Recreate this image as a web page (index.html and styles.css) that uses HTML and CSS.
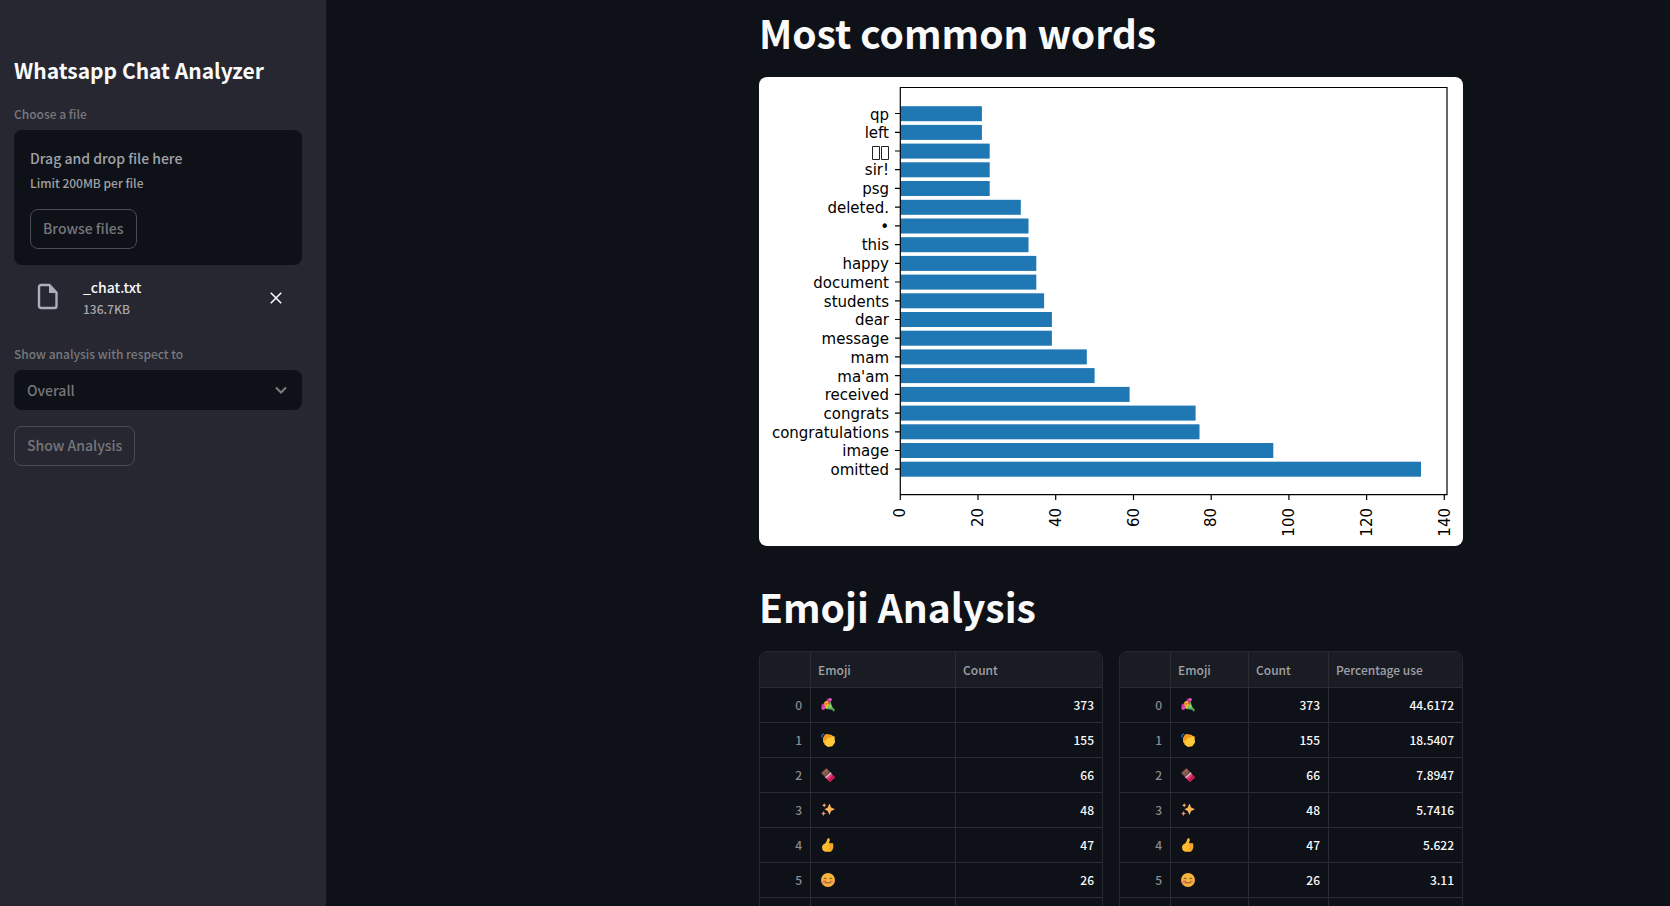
FILE: index.html
```html
<!DOCTYPE html>
<html lang="en">
<head>
<meta charset="utf-8">
<meta name="viewport" content="width=device-width, initial-scale=1">
<title>Whatsapp Chat Analyzer</title>
<link rel="stylesheet" href="styles.css">
</head>
<body>
<svg class="sprite" aria-hidden="true">
  <symbol id="bouquet" viewBox="0 0 14 14">
    <path fill="#4caf50" d="M5 9.500 9.500 3l1.500 5 1.200 2.200L14 11.500l-.6 1-.4 1.500-1.600-2-2.400-.6L5 11z"/>
    <path fill="#8bd36b" d="M7 9 9.800 6l1 3-1.300 1.400z"/>
    <circle cx="2.800" cy="7.800" r="2.400" fill="#c23a9b"/><circle cx="2.300" cy="10" r="2" fill="#d94bb0"/>
    <circle cx="7.800" cy="2.600" r="2.300" fill="#b92d92"/><circle cx="9.300" cy="1.600" r="1.500" fill="#e25fc0"/>
    <circle cx="5.800" cy="5.800" r="2.700" fill="#f5b52c"/><circle cx="5" cy="6" r="1" fill="#e8583a"/>
    <circle cx="7.800" cy="5" r="1.100" fill="#e8453f"/><circle cx="5.500" cy="9.300" r="1.200" fill="#f3cf3c"/>
  </symbol>
  <symbol id="clap" viewBox="0 0 14 14">
    <path fill="none" stroke="#1976d2" stroke-width="1.2" d="M1 4.500V2.200L3 .8"/>
    <path fill="#f59f1d" d="M2 5 4 1.600 6 1l5 1 2 3v5l-3 3H6L2 9z"/>
    <path fill="#ffca3a" d="M3.500 8 7 5l3-1 3.500-1 .5 6.500-2.700 3.700-4.300.8-3.500-2.500z"/>
    <path fill="none" stroke="#e88916" stroke-width=".7" d="m4.500 3 3 2M3 5l3 2M7.500 2.400l2 2"/>
  </symbol>
  <symbol id="chocolate" viewBox="0 0 14 14">
    <path fill="#795046" d="M5.500 0 10 5 4.500 9.500 0 5z"/>
    <path fill="#9b6b5c" d="m5.400 1.200 1.600 1.700-1.800 1.500-1.600-1.600zM3 3.300 4.600 5 3 6.400 1.400 4.900z"/>
    <path fill="#e5447e" d="m10 5 4 4.400-5 4.600-4.500-4.500z"/>
    <path fill="#c8184f" d="m11.500 7 2.500 2.400-5 4.600-2-2z"/>
    <path stroke="#dfbdcf" stroke-width="1.300" d="m4.400 9.700 5.800-5"/>
  </symbol>
  <symbol id="sparkles" viewBox="0 0 14 14">
    <path fill="#fbb65b" d="m8.500.500 1.600 4L14 6.200l-3.900 1.900-1.600 4-1.800-4L3.500 6.200l3.200-1.700z"/>
    <path fill="#f28d6a" d="m2.500 8 .8 1.800 1.800.8-1.800.7-.8 2-.8-2-1.700-.7 1.700-.8z"/>
    <path fill="#f7a46d" d="m3.200 0 .7 1.500 1.600.7-1.600.7-.7 1.600-.7-1.600L1 2.200l1.500-.7z"/>
  </symbol>
  <symbol id="thumb" viewBox="0 0 14 14">
    <path fill="#fbb92f" d="M7 .2c1.500-.3 2 .8 1.700 2.400L8 5.300h3c1.200 0 1.600 1 1 1.800.7.6.6 1.400 0 1.900.5.7.3 1.400-.4 1.800.3.8-.2 1.500-1 1.600 0 .9-.6 1.400-1.500 1.400H5C2.500 13.800 1 12 1 9.500c0-2 1-3.300 3-4C5.500 4 6.200 2 6.300.8z"/>
    <path fill="none" stroke="#e58b1c" stroke-width=".7" d="M8 7h4M8 9h4M8 11h3.500"/>
  </symbol>
  <symbol id="smile" viewBox="0 0 14 14">
    <circle cx="7" cy="7" r="7" fill="#f7b53c"/>
    <circle cx="3.200" cy="9" r="2.300" fill="#f08a55"/><circle cx="11" cy="9" r="2.200" fill="#f59b52"/>
    <path fill="none" stroke="#6b3a22" stroke-width=".9" stroke-linecap="round" d="M3 5.600q1.200-1.500 2.400 0M8.600 5.600q1.200-1.500 2.400 0M4 8.800q3 2.800 6 0"/>
  </symbol>
</svg>

<div class="app">
  <aside class="sidebar">
    <h1 class="sidebar-title">Whatsapp Chat Analyzer</h1>

    <label class="label" for="browse">Choose a file</label>
    <div class="dropzone">
      <span class="drop-main">Drag and drop file here</span>
      <span class="drop-hint">Limit 200MB per file</span>
      <button class="button" id="browse" type="button">Browse files</button>
    </div>
    <div class="file">
      <svg class="file-icon" viewBox="0 0 24 30" aria-hidden="true">
        <path fill="none" stroke="#a9aec0" stroke-width="2.400" stroke-linejoin="round" d="M5 3h8.500L20.500 10.500V24a2 2 0 0 1-2 2H5a2 2 0 0 1-2-2V5a2 2 0 0 1 2-2z"/>
        <path fill="#a9aec0" d="M13 3v8h8z"/>
      </svg>
      <div class="file-text">
        <span class="file-name">_chat.txt</span>
        <span class="file-size">136.7KB</span>
      </div>
      <button class="remove" type="button" aria-label="Remove file">
        <svg class="remove-icon" viewBox="0 0 12 12" aria-hidden="true"><path stroke="#fafafa" stroke-width="1.600" d="m.8.800 10.400 10.400M11.200.8.800 11.200"/></svg>
      </button>
    </div>

    <label class="label" for="user">Show analysis with respect to</label>
    <div class="select-wrap">
      <select class="select" id="user"><option>Overall</option></select>
      <svg class="chevron" viewBox="0 0 12 8" aria-hidden="true"><path fill="none" stroke="#7c7d80" stroke-width="2" d="m1 1.500 5 5 5-5"/></svg>
    </div>
    <button class="button" type="button">Show Analysis</button>
  </aside>

  <main class="main">
    <div class="content">
      <h2 class="heading">Most common words</h2>
      <svg class="chart" viewBox="0 0 704 469" role="img" aria-label="Most common words bar chart">
        <g class="bars">
          <rect x="141.300" y="29.2" width="81.600" height="15"/>
          <rect x="141.300" y="47.9" width="81.600" height="15"/>
          <rect x="141.300" y="66.6" width="89.400" height="15"/>
          <rect x="141.300" y="85.3" width="89.400" height="15"/>
          <rect x="141.300" y="104" width="89.400" height="15"/>
          <rect x="141.300" y="122.800" width="120.500" height="15"/>
          <rect x="141.300" y="141.500" width="128.200" height="15"/>
          <rect x="141.300" y="160.200" width="128.200" height="15"/>
          <rect x="141.300" y="178.900" width="136" height="15"/>
          <rect x="141.300" y="197.600" width="136" height="15"/>
          <rect x="141.300" y="216.300" width="143.800" height="15"/>
          <rect x="141.300" y="235" width="151.600" height="15"/>
          <rect x="141.300" y="253.700" width="151.600" height="15"/>
          <rect x="141.300" y="272.400" width="186.500" height="15"/>
          <rect x="141.300" y="291.100" width="194.300" height="15"/>
          <rect x="141.300" y="309.900" width="229.300" height="15"/>
          <rect x="141.300" y="328.600" width="295.300" height="15"/>
          <rect x="141.300" y="347.300" width="299.200" height="15"/>
          <rect x="141.300" y="366" width="373" height="15"/>
          <rect x="141.300" y="384.700" width="520.700" height="15"/>
        </g>
        <path class="axes" d="M141.300 10.500H688V417.600H141.300z"/>
        <path class="axes" d="M136 36.500h5M136 55.300h5M136 74h5M136 92.700h5M136 111.400h5M136 130.200h5M136 148.900h5M136 167.600h5M136 186.300h5M136 205h5M136 223.800h5M136 242.500h5M136 261.200h5M136 279.900h5M136 298.600h5M136 317.400h5M136 336.100h5M136 354.800h5M136 373.500h5M136 392.200h5M141.300 418v5M219 418v5M296.700 418v5M374.500 418v5M452.200 418v5M529.900 418v5M607.600 418v5M685.300 418v5"/>
        <path class="missing" d="M113.500 69.500h7v13h-7zM122.500 69.500h7v13h-7z"/>
        <g class="words">
          <text x="130" y="43">qp</text>
          <text x="130" y="61">left</text>
          <text x="130" y="98">sir!</text>
          <text x="130" y="117">psg</text>
          <text x="130" y="136">deleted.</text>
          <text x="130" y="155">•</text>
          <text x="130" y="173">this</text>
          <text x="130" y="192">happy</text>
          <text x="130" y="211">document</text>
          <text x="130" y="230">students</text>
          <text x="130" y="248">dear</text>
          <text x="130" y="267">message</text>
          <text x="130" y="286">mam</text>
          <text x="130" y="305">ma'am</text>
          <text x="130" y="323">received</text>
          <text x="130" y="342">congrats</text>
          <text x="130" y="361">congratulations</text>
          <text x="130" y="379">image</text>
          <text x="130" y="398">omitted</text>
        </g>
        <g class="words">
          <text transform="translate(146 431) rotate(-90)">0</text>
          <text transform="translate(224 431) rotate(-90)">20</text>
          <text transform="translate(302 431) rotate(-90)">40</text>
          <text transform="translate(380 431) rotate(-90)">60</text>
          <text transform="translate(457 431) rotate(-90)">80</text>
          <text transform="translate(535 431) rotate(-90)">100</text>
          <text transform="translate(613 431) rotate(-90)">120</text>
          <text transform="translate(691 431) rotate(-90)">140</text>
        </g>
      </svg>

      <h2 class="heading">Emoji Analysis</h2>
      <div class="tables">
        <div class="table-frame">
          <table class="table">
            <colgroup><col class="col-index"><col class="col-emoji-wide"><col></colgroup>
            <thead><tr><th scope="col" aria-label="Index"></th><th scope="col">Emoji</th><th scope="col">Count</th></tr></thead>
            <tbody>
              <tr><td class="index">0</td><td><svg class="emoji" role="img" aria-label="Bouquet"><use href="#bouquet"/></svg></td><td class="num">373</td></tr>
              <tr><td class="index">1</td><td><svg class="emoji" role="img" aria-label="Clapping hands"><use href="#clap"/></svg></td><td class="num">155</td></tr>
              <tr><td class="index">2</td><td><svg class="emoji" role="img" aria-label="Chocolate bar"><use href="#chocolate"/></svg></td><td class="num">66</td></tr>
              <tr><td class="index">3</td><td><svg class="emoji" role="img" aria-label="Sparkles"><use href="#sparkles"/></svg></td><td class="num">48</td></tr>
              <tr><td class="index">4</td><td><svg class="emoji" role="img" aria-label="Thumbs up"><use href="#thumb"/></svg></td><td class="num">47</td></tr>
              <tr><td class="index">5</td><td><svg class="emoji" role="img" aria-label="Smiling face"><use href="#smile"/></svg></td><td class="num">26</td></tr>
              <tr><td></td><td></td><td></td></tr>
            </tbody>
          </table>
        </div>
        <div class="table-frame">
          <table class="table">
            <colgroup><col class="col-index"><col class="col-emoji"><col class="col-count"><col></colgroup>
            <thead><tr><th scope="col" aria-label="Index"></th><th scope="col">Emoji</th><th scope="col">Count</th><th scope="col">Percentage use</th></tr></thead>
            <tbody>
              <tr><td class="index">0</td><td><svg class="emoji" role="img" aria-label="Bouquet"><use href="#bouquet"/></svg></td><td class="num">373</td><td class="num">44.6172</td></tr>
              <tr><td class="index">1</td><td><svg class="emoji" role="img" aria-label="Clapping hands"><use href="#clap"/></svg></td><td class="num">155</td><td class="num">18.5407</td></tr>
              <tr><td class="index">2</td><td><svg class="emoji" role="img" aria-label="Chocolate bar"><use href="#chocolate"/></svg></td><td class="num">66</td><td class="num">7.8947</td></tr>
              <tr><td class="index">3</td><td><svg class="emoji" role="img" aria-label="Sparkles"><use href="#sparkles"/></svg></td><td class="num">48</td><td class="num">5.7416</td></tr>
              <tr><td class="index">4</td><td><svg class="emoji" role="img" aria-label="Thumbs up"><use href="#thumb"/></svg></td><td class="num">47</td><td class="num">5.622</td></tr>
              <tr><td class="index">5</td><td><svg class="emoji" role="img" aria-label="Smiling face"><use href="#smile"/></svg></td><td class="num">26</td><td class="num">3.11</td></tr>
              <tr><td></td><td></td><td></td><td></td></tr>
            </tbody>
          </table>
        </div>
      </div>
    </div>
  </main>
</div>
</body>
</html>
```
FILE: styles.css
```css
* { box-sizing: border-box; }

body {
  margin: 0;
  background: #0e1117;
  color: #fafafa;
  font-family: "Noto Sans CJK SC", "Noto Sans", sans-serif;
  font-size: 14px;
  font-weight: 500;
  line-height: 24px;
}

.sprite { display: none; }

.app {
  display: flex;
  height: 100vh;
  overflow: hidden;
}

/* Sidebar */
.sidebar {
  flex: 0 0 326px;
  padding: 55px 24px 24px 14px;
  background: #262730;
}

.sidebar-title {
  margin: 0 0 17px;
  font-size: 21px;
  font-weight: 700;
  line-height: 30px;
}

.label {
  display: block;
  margin-bottom: 4px;
  color: #78797e;
  font-size: 12px;
}

.dropzone {
  display: flex;
  flex-direction: column;
  align-items: flex-start;
  padding: 16px;
  border-radius: 8px;
  background: #0e1117;
}

.drop-main { color: #a0a2a8; }

.drop-hint {
  margin-bottom: 14px;
  color: #a0a0a2;
  font-size: 12px;
  line-height: 25px;
}

.button {
  height: 40px;
  padding: 0 12px 2px;
  border: 1px solid #4b4c52;
  border-radius: 8px;
  background: transparent;
  color: #75767a;
  font: inherit;
}

.file {
  display: flex;
  align-items: center;
  padding: 11px 20px 0 22px;
  margin-bottom: 22px;
}

.file-icon {
  width: 24px;
  height: 30px;
  margin-bottom: 3px;
}

.file-text {
  display: flex;
  flex: 1;
  flex-direction: column;
  padding-left: 23px;
  line-height: 22px;
}

.file-size {
  color: #a8a8ac;
  font-size: 12px;
}

.remove {
  padding: 0;
  border: 0;
  background: none;
  line-height: 0;
}

.remove-icon {
  width: 12px;
  height: 12px;
}

.select-wrap {
  display: grid;
  align-items: center;
  margin-bottom: 16px;
}

.select {
  grid-area: 1 / 1;
  width: 100%;
  height: 40px;
  padding: 0 13px;
  border: 0;
  border-radius: 8px;
  appearance: none;
  background: #0e1117;
  color: #75767a;
  font: inherit;
}

.chevron {
  grid-area: 1 / 1;
  justify-self: end;
  width: 12px;
  height: 8px;
  margin-right: 15px;
  pointer-events: none;
}

/* Main column */
.main {
  display: grid;
  flex: 1;
  grid-template-columns: 433fr 704fr 207fr;
  align-items: start;
  padding-top: 8px;
}

.content {
  grid-column: 2;
  min-width: 0;
}

.heading {
  margin: 0 0 20px;
  font-size: 39px;
  font-weight: 700;
  line-height: 49px;
}

.chart {
  display: block;
  width: 100%;
  margin-bottom: 36px;
  border-radius: 8px;
  background: #fff;
}

.bars { fill: #1f77b4; }

.axes {
  fill: none;
  stroke: #000;
  stroke-width: 1.2;
}

.missing {
  fill: none;
  stroke: #222;
}

.words {
  fill: #000;
  font-family: "DejaVu Sans", sans-serif;
  font-size: 15px;
  font-weight: 400;
  text-anchor: end;
}

/* Tables */
.tables {
  display: grid;
  grid-template-columns: 1fr 1fr;
  gap: 16px;
}

.table-frame {
  overflow: hidden;
  border: 1px solid #26292e;
  border-radius: 8px;
}

.table {
  width: 100%;
  border-collapse: separate;
  border-spacing: 0;
  table-layout: fixed;
  font-size: 12px;
  line-height: 24px;
}

.col-index { width: 51px; }
.col-emoji { width: 78px; }
.col-count { width: 80px; }
.col-emoji-wide { width: 145px; }

.table th,
.table td {
  height: 35px;
  padding: 0 8px;
  border-right: 1px solid #2a2c32;
  border-bottom: 1px solid #2a2c32;
}

.table th:last-child,
.table td:last-child { border-right: 0; }

.table th {
  height: 36px;
  padding-left: 7px;
  background: #1a1c24;
  color: #a0a1a5;
  font-weight: 500;
  text-align: left;
}

.table .index {
  color: #8b8c90;
  text-align: right;
}

.table .num { text-align: right; }

.emoji {
  display: block;
  width: 14px;
  height: 14px;
  margin-left: 2px;
}
```
